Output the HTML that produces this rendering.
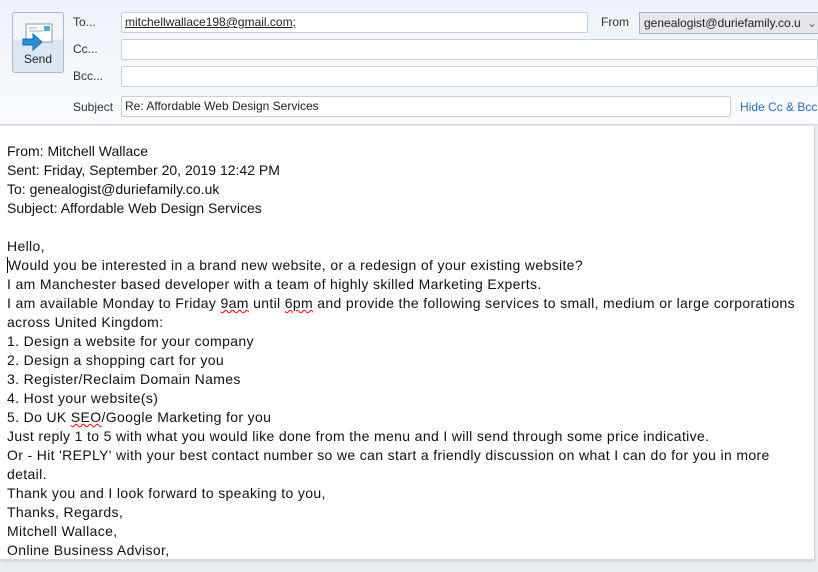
<!DOCTYPE html>
<html><head><meta charset="utf-8"><style>
*{margin:0;padding:0;box-sizing:border-box}
body{width:818px;height:572px;overflow:hidden;background:#e9ecf0;font-family:"Liberation Sans",sans-serif;position:relative}
.hdr{position:absolute;left:0;top:0;width:818px;height:125px;background:linear-gradient(#eef2f8,#f9fbfd);border-bottom:1px solid #d5d9de}
.send{position:absolute;left:12px;top:12px;width:52px;height:61px;border:1px solid #a9bacd;border-radius:3px;background:linear-gradient(#f1f5fa 0,#f1f5fa 45%,#dde7f2 45%);}
.send span{position:absolute;left:0;width:100%;top:39px;text-align:center;font-size:12px;color:#222}
.lbl{position:absolute;left:73px;font-size:12px;color:#333}
.fld{position:absolute;left:121px;height:21px;background:#fff;border:1px solid #c9cfd6;border-radius:2px;font-size:12px;color:#222;padding:2px 3px;white-space:nowrap}
.body{position:absolute;left:0;top:126px;width:815px;height:434px;background:#fff;border-right:1px solid #d5d9de;border-bottom:1px solid #d5d9de;box-shadow:0 1px 2px #ccc}
.txt{position:absolute;left:7px;top:16px;font-size:14px;line-height:19px;color:#111;white-space:nowrap}
.ls{letter-spacing:0.35px}
.sq{text-decoration:underline wavy #e00;text-decoration-thickness:1px}
</style></head><body>
<div class="hdr">
 <div class="send">
  <svg width="52" height="40" style="position:absolute;left:0;top:0">
   <rect x="13" y="11" width="26" height="18" fill="#fff" stroke="#8a99aa"/>
   <rect x="31" y="13" width="6" height="5" fill="#4cb4c8"/>
   <line x1="16" y1="15" x2="24" y2="15" stroke="#aab"/>
   <line x1="16" y1="18" x2="30" y2="18" stroke="#aab"/>
   <path d="M10 26 h10 v-5 l9 8 l-9 8 v-5 h-10z" fill="#2a8fd8" stroke="#1a6eb0"/>
  </svg>
  <span>Send</span>
 </div>
 <div class="lbl" style="top:15px">To...</div>
 <div class="lbl" style="top:42px">Cc...</div>
 <div class="lbl" style="top:69px">Bcc...</div>
 <div class="lbl" style="top:100px">Subject</div>
 <div class="fld" style="top:12px;width:467px"><u>mitchellwallace198@gmail.com;</u></div>
 <div class="lbl" style="left:601px;top:15px">From</div>
 <div style="position:absolute;left:639px;top:12px;width:180px;height:22px;background:#e4e6ea;border:1px solid #adb2b8;font-size:12px;color:#222;padding:3px 4px;white-space:nowrap;overflow:hidden">genealogist@duriefamily.co.u <span style="color:#666;margin-left:3px">&#8964;</span></div>
 <div class="fld" style="top:39px;width:697px"></div>
 <div class="fld" style="top:66px;width:697px"></div>
 <div class="fld" style="top:96px;width:610px">Re: Affordable Web Design Services</div>
 <div style="position:absolute;left:740px;top:100px;font-size:12px;color:#2a6fc0;white-space:nowrap">Hide Cc &amp; Bcc</div>
</div>
<div class="body"><div class="txt">From: Mitchell Wallace<br>Sent: Friday, September 20, 2019 12:42 PM<br>To: genealogist@duriefamily.co.uk<br>Subject: Affordable Web Design Services<br><br><span class="ls">Hello,<br><span style="border-left:1px solid #000">Would you be interested in a brand new website, or a redesign of your existing website?</span><br>I am Manchester based developer with a team of highly skilled Marketing Experts.<br>I am available Monday to Friday <span class="sq">9am</span> until <span class="sq">6pm</span> and provide the following services to small, medium or large corporations<br>across United Kingdom:<br>1. Design a website for your company<br>2. Design a shopping cart for you<br>3. Register/Reclaim Domain Names<br>4. Host your website(s)<br>5. Do UK <span class="sq">SEO</span>/Google Marketing for you<br>Just reply 1 to 5 with what you would like done from the menu and I will send through some price indicative.<br>Or - Hit 'REPLY' with your best contact number so we can start a friendly discussion on what I can do for you in more<br>detail.<br>Thank you and I look forward to speaking to you,<br>Thanks, Regards,<br>Mitchell Wallace,<br>Online Business Advisor,</span></div></div>
</body></html>
